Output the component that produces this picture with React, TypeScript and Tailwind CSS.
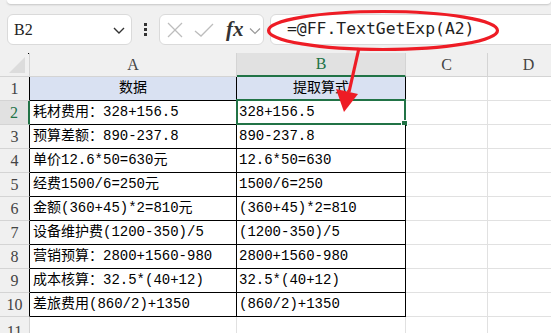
import React from "react";

const rows: [string, string][] = [
  ["数据", "提取算式"],
  ["耗材费用：328+156.5", "328+156.5"],
  ["预算差额：890-237.8", "890-237.8"],
  ["单价12.6*50=630元", "12.6*50=630"],
  ["经费1500/6=250元", "1500/6=250"],
  ["金额(360+45)*2=810元", "(360+45)*2=810"],
  ["设备维护费(1200-350)/5", "(1200-350)/5"],
  ["营销预算：2800+1560-980", "2800+1560-980"],
  ["成本核算：32.5*(40+12)", "32.5*(40+12)"],
  ["差旅费用(860/2)+1350", "(860/2)+1350"],
];

const cellFont = { fontFamily: '"Liberation Mono", "Noto Sans CJK SC", monospace' };
const serif = { fontFamily: '"Liberation Serif", "Noto Sans CJK SC", serif' };

export default function App() {
  return (
    <div className="relative w-[551px] h-[333px] overflow-hidden bg-[#f0f0f0]">
      {/* top strip */}
      <div className="ml-[7px] h-[4px] bg-white rounded-b-[5px] shadow-[0_1px_2px_rgba(0,0,0,0.18)]" />
      {/* formula row */}
      <div className="mt-[10px] h-[31px] flex pl-[7px]">
        <div className="w-[125px] bg-white border border-[#dadada] rounded-[6px] flex items-center justify-between pl-[6px] pr-[4px]">
          <span className="text-[16px] text-[#222]" style={serif}>B2</span>
          <svg width="14" height="14" viewBox="0 0 14 14" className="mr-[1px]">
            <polyline points="2,5 7,10 12,5" fill="none" stroke="#333" strokeWidth="1.4" />
          </svg>
        </div>
        <div className="w-[27px] flex flex-col items-center justify-center gap-[2px]">
          <div className="w-[3px] h-[3px] bg-[#333]" />
          <div className="w-[3px] h-[3px] bg-[#333]" />
          <div className="w-[3px] h-[3px] bg-[#333]" />
        </div>
        <div className="w-[105px] bg-white border border-[#dadada] rounded-[6px] flex items-center pl-[6px]">
          <svg width="18" height="18" viewBox="0 0 18 18">
            <line x1="2" y1="2" x2="16" y2="16" stroke="#bdbdbd" strokeWidth="1.3" />
            <line x1="16" y1="2" x2="2" y2="16" stroke="#bdbdbd" strokeWidth="1.3" />
          </svg>
          <svg width="22" height="18" viewBox="0 0 22 18" className="ml-[9px]">
            <polyline points="2,10 8,15 20,3" fill="none" stroke="#bdbdbd" strokeWidth="1.3" />
          </svg>
          <span className="ml-[11px] text-[21px] italic font-bold leading-none text-[#333]" style={serif}>fx</span>
          <svg width="12" height="8" viewBox="0 0 12 8" className="ml-[5px] mt-[2px]">
            <polyline points="1,1.5 6,6.5 11,1.5" fill="none" stroke="#999" strokeWidth="1.2" />
          </svg>
        </div>
        <div className="ml-[6px] flex-1 -mr-[10px] bg-white border border-[#dadada] rounded-[6px] flex items-center pl-[16px]">
          <span className="text-[16.4px] text-[#1f1f1f]" style={{ fontFamily: '"DejaVu Sans Mono", monospace' }}>
            =@FF.TextGetExp(A2)
          </span>
        </div>
      </div>
      <div className="h-[8px]" />
      {/* grid */}
      <div className="grid grid-cols-[30px_207px_169px_82px_1fr] auto-rows-[24px]">
        {/* header row */}
        <div className="relative bg-[#f0f0f0] border-r border-b border-[#d4d4d4]">
          <svg width="18" height="18" viewBox="0 0 18 18" className="absolute right-[3px] bottom-[2px]">
            <polygon points="17,1 17,17 1,17" fill="#dcdcdc" />
          </svg>
          <div className="absolute right-0 top-0 w-[1px] h-[1px] bg-black" />
        </div>
        <div className="bg-[#f0f0f0] border-r border-b border-[#d4d4d4] flex items-center justify-center text-[16px] text-[#444]" style={serif}>A</div>
        <div className="bg-[#e1e1e1] border-r border-[#d4d4d4] border-b-2 border-b-[#217346] flex items-center justify-center text-[16px] text-[#217346]" style={serif}>B</div>
        <div className="bg-[#f0f0f0] border-r border-b border-[#d4d4d4] flex items-center justify-center text-[16px] text-[#444]" style={serif}>C</div>
        <div className="bg-[#f0f0f0] border-b border-[#d4d4d4] flex items-center justify-center text-[16px] text-[#444] pl-[18px]" style={serif}>D</div>

        {rows.map((r, i) => {
          const n = i + 1;
          const sel = n === 2;
          const head = n === 1;
          return (
            <React.Fragment key={n}>
              <div
                className={
                  sel
                    ? "bg-[#e1e1e1] border-r-2 border-r-[#217346] border-b border-b-[#d4d4d4] flex items-center justify-center text-[16px] text-[#217346]"
                    : "bg-[#f0f0f0] border-r border-r-black border-b border-b-[#d4d4d4] flex items-center justify-center text-[16px] text-[#444]"
                }
                style={serif}
              >
                {n}
              </div>
              <div
                className={
                  head
                    ? "bg-[#d9e1f2] border-r border-b border-black flex items-center justify-center text-[14px] text-black whitespace-nowrap"
                    : "bg-white border-r border-b border-black flex items-center pl-[3px] text-[14px] text-black whitespace-nowrap"
                }
                style={cellFont}
              >
                {r[0]}
              </div>
              <div
                className={
                  head
                    ? "bg-[#d9e1f2] border-r border-b border-black flex items-center justify-center text-[14px] text-black whitespace-nowrap"
                    : "relative bg-white border-r border-b border-black flex items-center pl-[2px] text-[14px] text-black whitespace-nowrap"
                }
                style={cellFont}
              >
                {r[1]}
                {sel && (
                  <>
                    <div className="absolute left-[-1px] top-[-2px] right-[-1px] bottom-[-1px] border-2 border-[#217346]" />
                    <div className="absolute right-[-3px] bottom-[-3px] w-[5px] h-[5px] bg-[#217346] border border-white box-content" />
                  </>
                )}
              </div>
              <div className="bg-white border-r border-b border-[#e1e1e1]" />
              <div className="bg-white border-b border-[#e1e1e1]" />
            </React.Fragment>
          );
        })}
        <div className="bg-[#f0f0f0] border-r border-[#d4d4d4] flex items-start justify-center pt-[3px] text-[16px] text-[#444]" style={serif}>11</div>
        <div className="bg-white border-r border-[#e1e1e1]" />
        <div className="bg-white border-r border-[#e1e1e1]" />
        <div className="bg-white border-r border-[#e1e1e1]" />
        <div className="bg-white" />
      </div>

      {/* annotation overlay */}
      <svg className="absolute left-0 top-0 pointer-events-none" width="551" height="333" viewBox="0 0 551 333">
        <ellipse cx="383" cy="30.5" rx="114.5" ry="19" fill="none" stroke="#ee1c25" strokeWidth="3.2" />
        <line x1="359" y1="48" x2="349" y2="92" stroke="#ee1c25" strokeWidth="3.2" />
        <polygon points="336,89 358,94 344,112" fill="#ee1c25" />
      </svg>
    </div>
  );
}
